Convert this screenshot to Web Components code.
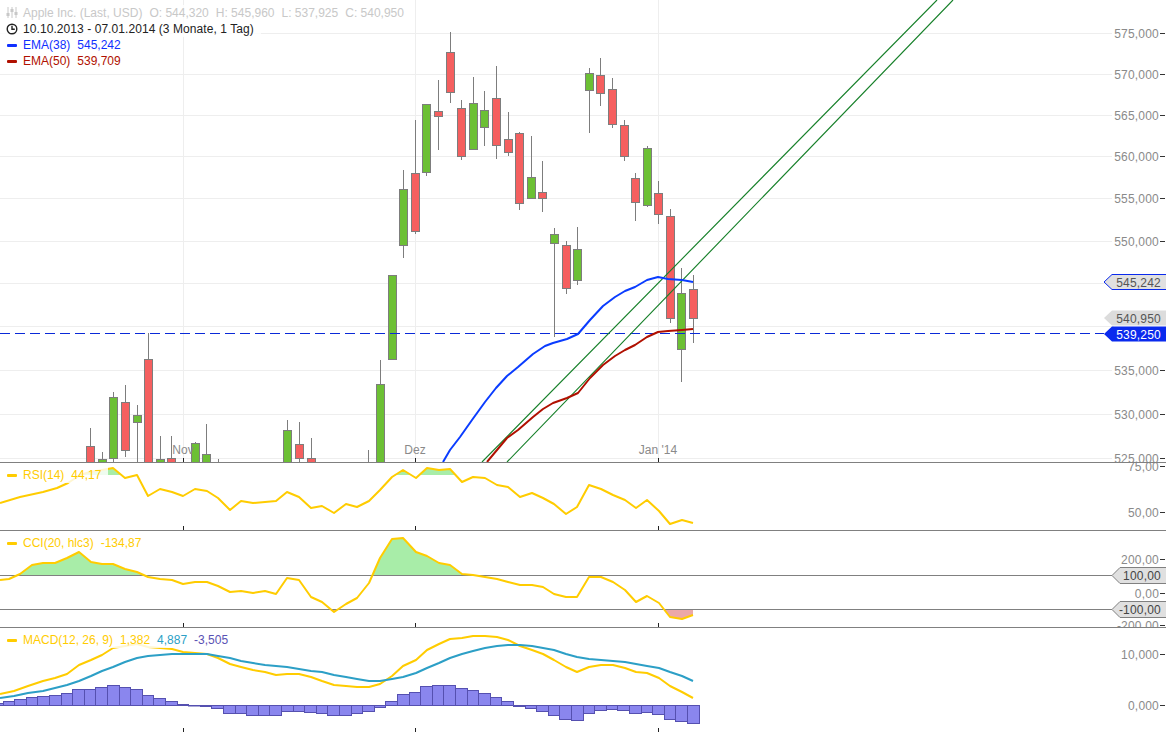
<!DOCTYPE html>
<html lang="de">
<head>
<meta charset="utf-8">
<title>Apple Inc.</title>
<style>
    html, body { margin: 0; padding: 0; background: #fff; overflow: hidden; }
    body { font: 12px "Liberation Sans", Arial, sans-serif; }
    .gap { margin-left: 7px; }
</style>
</head>
<body>
<stock-chart>
    <price-pane>
        <legend-row color="#c8c8c8" kind="sliders">Apple Inc. (Last, USD)<span class="gap">O: 544,320</span><span class="gap">H: 545,960</span><span class="gap">L: 537,925</span><span class="gap">C: 540,950</span></legend-row>
        <legend-row color="#222" kind="clock"><span style="letter-spacing:.07px">10.10.2013 - 07.01.2014 (3 Monate, 1 Tag)</span></legend-row>
        <legend-row color="#1030ff">EMA(38)<span class="gap">545,242</span></legend-row>
        <legend-row color="#b01000">EMA(50)<span class="gap">539,709</span></legend-row>
    </price-pane>
    <rsi-pane>
        <legend-row color="#ffcc00">RSI(14)<span class="gap">44,17</span></legend-row>
    </rsi-pane>
    <cci-pane>
        <legend-row color="#ffcc00">CCI(20, hlc3)<span class="gap">-134,87</span></legend-row>
    </cci-pane>
    <macd-pane>
        <legend-row color="#ffcc00">MACD(12, 26, 9)<span class="gap">1,382</span><span class="gap" style="color:#2c9fc6">4,887</span><span class="gap" style="color:#5a52b4">-3,505</span></legend-row>
    </macd-pane>
</stock-chart>

<script>
const SVG_FONT = 'font-family="Liberation Sans, Arial, sans-serif" font-size="12"';
const MONTH_TICKS = [183, 415, 658];
const YELLOW = '#ffcc00';

class StockChart extends HTMLElement {
    constructor() {
        super();
        this.attachShadow({ mode: 'open' });
        this.shadowRoot.innerHTML = `
            <style>
                :host { display: flex; flex-direction: column; width: 1166px; height: 732px; background: #fff; }
            </style>
            <slot></slot>
        `;
    }
}

class LegendRow extends HTMLElement {
    constructor() {
        super();
        this.attachShadow({ mode: 'open' });
    }

    connectedCallback() {
        const color = this.getAttribute('color');
        const kind = this.getAttribute('kind');
        let icon = `<i style="background:${color}"></i>`;
        if (kind === 'sliders') {
            icon = `<svg width="12" height="12" viewBox="0 0 12 12" fill="none" stroke="${color}">
                <path d="M2 0v11M6 0v11M10 0v11"/>
                <path d="M2 6v3M6 2v3M10 5v3" stroke-width="3"/>
            </svg>`;
        } else if (kind === 'clock') {
            icon = `<svg width="12" height="12" viewBox="0 0 12 12" fill="none" stroke="${color}" stroke-width="1.4">
                <circle cx="6" cy="6" r="4.8"/>
                <path d="M6 2.8V6.2H8.8"/>
            </svg>`;
        }
        this.shadowRoot.innerHTML = `
            <style>
                :host {
                    display: flex;
                    align-items: center;
                    width: fit-content;
                    height: 16px;
                    padding: 0 7px 0 6px;
                    background: rgba(255,255,255,0.82);
                    color: ${color};
                    white-space: nowrap;
                }
                .mark { width: 12px; margin-right: 5px; display: flex; align-items: center; }
                i { display: block; width: 10px; height: 3px; margin-left: 1px; border-radius: 1px; }
                svg { display: block; }
            </style>
            <span class="mark">${icon}</span>
            <slot></slot>
        `;
    }
}

// one chart panel: an svg in page coordinates with the legend on top of it
class ChartPane extends HTMLElement {
    constructor() {
        super();
        this.attachShadow({ mode: 'open' });
    }

    get top() { return 0; }
    get paneHeight() { return 100; }
    get legendTop() { return 4; }
    get hasBorder() { return true; }

    connectedCallback() {
        const t = this.top, h = this.paneHeight;
        this.shadowRoot.innerHTML = `
            <style>
                :host {
                    display: block;
                    position: relative;
                    flex: none;
                    height: ${h}px;
                    border-bottom: ${this.hasBorder ? '1px solid #808080' : 'none'};
                    overflow: hidden;
                }
                svg { display: block; }
                .legend { position: absolute; left: 0; top: ${this.legendTop}px; }
            </style>
            <svg width="1166" height="${h}" viewBox="0 ${t} 1166 ${h}" ${SVG_FONT}>${this.draw()}</svg>
            <div class="legend"><slot></slot></div>
        `;
    }

    draw() { return ''; }

    line(points, color, width = 2) {
        return `<polyline points="${points}" fill="none" stroke="${color}" stroke-width="${width}" stroke-linejoin="round"/>`;
    }

    hline(y, color = '#808080', x2 = 1166) {
        return `<path d="M0 ${y + 0.5}H${x2}" stroke="${color}"/>`;
    }

    ticks(bottom) {
        return MONTH_TICKS.map(x => `<path d="M${x + 0.5} ${bottom - 4}V${bottom}" stroke="#222"/>`).join('');
    }

    axisLabel(text, y) {
        return `<rect x="1112" y="${y - 6}" width="48" height="12" fill="#fff"/>
            <text x="1159" y="${y + 4.5}" text-anchor="end" letter-spacing=".2" fill="#8a8a8a">${text}</text>
            <path d="M1160 ${y + 0.5}H1165" stroke="#333"/>`;
    }

    // price tag pointing left at the plot
    tag(text, top, h, left, fill, color, stroke) {
        const tip = left + 8;
        const outline = stroke ? `stroke="${stroke}"` : '';
        return `<path d="M1167 ${top + 0.5}H${tip}L${left} ${top + h / 2 + 0.5}L${tip} ${top + h + 0.5}H1167Z" fill="${fill}" ${outline}/>
            <text x="1161" y="${top + 12.5}" text-anchor="end" letter-spacing=".2" fill="${color}">${text}</text>`;
    }

    // area between a curve and a level, on one side of the level only
    area(id, points, level, above, color) {
        const xs = points.trim().split(/\s+/).map(p => p.split(',')[0]);
        const first = xs[0], last = xs[xs.length - 1];
        const y = above ? this.top : level;
        const h = above ? level - this.top : this.top + this.paneHeight - level;
        return `<clipPath id="${id}"><rect x="0" y="${y}" width="1166" height="${h}"/></clipPath>
            <polygon clip-path="url(#${id})" points="${first},${level} ${points} ${last},${level}" fill="${color}"/>`;
    }
}

// x, wick top, body top, body bottom, wick bottom, 1 = green
const CANDLES = [
    [90, 428, 446, 470, 470, 0], [102, 452, 459, 470, 470, 1], [113, 392, 397, 458, 470, 1],
    [125, 385, 402, 450, 457, 0], [137, 405, 415, 422, 470, 1], [148, 333, 359, 470, 470, 0],
    [160, 436, 459, 470, 470, 1], [171, 436, 458, 470, 470, 0], [195, 442, 443, 470, 470, 1],
    [206, 424, 454, 470, 470, 1], [218, 459, 470, 470, 470, 1], [287, 420, 430, 470, 470, 1],
    [299, 422, 444, 458, 470, 0], [311, 438, 458, 470, 470, 0], [368, 450, 470, 470, 470, 1],
    [380, 360, 384, 470, 470, 1], [392, 275, 275, 359, 359, 1], [403, 170, 189, 245, 258, 1],
    [415, 120, 173, 231, 234, 0], [426, 104, 104, 172, 176, 1], [438, 80, 111, 116, 150, 0],
    [450, 32, 52, 92, 103, 0], [461, 100, 108, 156, 160, 0], [473, 77, 103, 149, 149, 1],
    [484, 91, 110, 127, 146, 1], [496, 66, 98, 145, 159, 0], [508, 112, 139, 152, 156, 0],
    [519, 132, 133, 203, 210, 0], [531, 136, 177, 198, 198, 1], [542, 161, 192, 198, 212, 0],
    [554, 228, 234, 243, 337, 1], [566, 241, 245, 288, 294, 0], [577, 227, 249, 280, 285, 1],
    [589, 68, 73, 90, 133, 1], [600, 58, 75, 93, 106, 0], [612, 78, 89, 124, 128, 0],
    [624, 120, 125, 156, 161, 0], [635, 173, 178, 202, 221, 0], [647, 146, 148, 205, 207, 1],
    [658, 181, 193, 214, 224, 0], [670, 209, 216, 318, 323, 0], [681, 268, 293, 349, 382, 1],
    [693, 275, 289, 318, 343, 0]
];

const EMA_38 = `443,462 450,450 460,437 472,420 485,402 496,388 507,376 518,367 533,354 545,346 553,343 567,339
    578,334 590,320 603,306 615,297 625,291 635,287 647,280 658,277 668,279 682,280 693,282`;
const EMA_50 = `487,462 507,438 518,430 533,417 543,409 553,403 567,398 578,393 590,378 603,365 615,356 625,350
    635,345 647,337 658,332 668,331 682,330 693,329`;

class PricePane extends ChartPane {
    get top() { return 0; }
    get paneHeight() { return 462; }
    get legendTop() { return 5; }

    draw() {
        const levels = [33, 74, 115, 156, 198, 241, 283, 326, 370, 414, 458];
        const labels = [['575,000', 33], ['570,000', 74], ['565,000', 115], ['560,000', 156], ['555,000', 198],
            ['550,000', 241], ['535,000', 370], ['530,000', 414], ['525,000', 458]];
        let out = levels.map(y => this.hline(y, '#eeeeee', 1114)).join('');
        out += MONTH_TICKS.map(x => `<path d="M${x + 0.5} 0V462" stroke="#eeeeee"/>`).join('');
        for (const [x, wt, bt, bb, wb, up] of CANDLES) {
            out += `<path d="M${x + 0.5} ${wt}V${wb}" stroke="#7d7d7d"/>`;
            out += `<rect x="${x - 3.5}" y="${bt + 0.5}" width="8" height="${bb - bt}" fill="${up ? '#6cc034' : '#f55f5f'}" stroke="#7d7d7d"/>`;
        }
        out += `<path d="M0 333.5H1104" stroke="#0a2ad8" stroke-dasharray="10 5"/>`;
        out += `<path d="M482 462L937 0M507 462L953 0" stroke="#17802a" stroke-width="1.15" fill="none"/>`;
        out += this.line(EMA_38, '#0a3cff');
        out += this.line(EMA_50, '#b01000');
        out += labels.map(([t, y]) => this.axisLabel(t, y)).join('');
        out += this.tag('545,242', 274, 15, 1104, '#e0e0e0', '#555', '#0a2aee');
        out += this.tag('540,950', 310, 15, 1104, '#dcdcdc', '#555');
        out += this.tag('539,250', 326, 15, 1104, '#0a2aee', '#fff');
        out += `<text x="183" y="454" text-anchor="middle" fill="#8a8a8a">Nov</text>
            <text x="415" y="454" text-anchor="middle" fill="#8a8a8a">Dez</text>
            <text x="658" y="454" text-anchor="middle" fill="#8a8a8a">Jan '14</text>`;
        out += this.ticks(462);
        return out;
    }
}

const RSI = `0,503 20,497 43,492 57,488 68,483 80,475 90,472 102,470 113,468 125,478 137,475 148,496 160,489 172,492
    183,496 195,489 207,491 218,498 230,510 241,501 253,503 276,501 287,492 299,497 311,508 322,506 334,513 346,504
    357,507 369,501 380,490 392,477 403,470 416,478 427,468 439,470 450,469 462,482 473,477 485,478 497,485 508,487
    520,497 532,493 543,498 554,504 566,514 577,507 589,485 601,489 613,495 625,500 636,508 647,500 659,511 670,524
    682,520 693,523`;

class RsiPane extends ChartPane {
    get top() { return 463; }
    get paneHeight() { return 67; }

    draw() {
        return this.area('rsi-up', RSI, 475, true, '#a8eda8')
            + this.line(RSI, YELLOW)
            + this.axisLabel('75,00', 466)
            + this.axisLabel('50,00', 512)
            + this.ticks(530);
    }
}

const CCI = `0,580 9,579 20,574 32,565 43,563 55,563 67,558 79,552 91,562 102,564 113,564 125,569 137,572 148,577 160,579
    172,580 183,584 195,582 207,582 218,586 230,592 241,591 253,593 265,591 276,594 287,578 299,580 311,597 322,602
    334,612 346,604 357,598 369,583 380,558 392,539 403,538 416,552 427,556 439,563 450,565 462,574 473,575 485,577
    497,579 508,582 520,585 532,585 543,587 554,594 566,597 577,597 589,577 601,577 613,582 625,590 636,602 647,596
    659,603 670,617 682,619 693,615`;

class CciPane extends ChartPane {
    get top() { return 531; }
    get paneHeight() { return 96; }

    draw() {
        return this.area('cci-up', CCI, 575.5, true, '#a8eda8')
            + this.area('cci-down', CCI, 609.5, false, '#eca8a8')
            + this.hline(575, '#808080', 1112)
            + this.hline(609, '#808080', 1112)
            + this.line(CCI, YELLOW)
            + this.axisLabel('200,00', 559)
            + this.axisLabel('0,00', 593)
            + this.axisLabel('-200,00', 625)
            + this.tag('100,00', 567, 16, 1112, '#e0e0e0', '#444', '#808080')
            + this.tag('-100,00', 601, 16, 1112, '#e0e0e0', '#444', '#808080')
            + this.ticks(627);
    }
}

const MACD = `0,694 14,691 28,686 43,681 55,678 67,674 79,665 91,660 102,655 113,648 125,646 137,644 148,647 160,648 172,649
    183,652 195,653 207,654 218,658 230,664 241,667 253,670 265,672 276,675 287,674 299,674 311,677 322,681 334,685
    346,686 357,687 369,687 380,684 392,676 403,666 416,660 427,650 439,644 450,639 462,638 473,636 485,636 497,637
    508,640 520,646 532,650 543,654 554,660 566,667 577,672 589,667 601,665 613,665 625,668 636,672 647,673 659,678
    670,686 682,692 693,698`;
const SIGNAL = `0,698 14,696 28,693 43,691 55,688 67,685 79,681 91,676 102,671 113,667 125,662 137,658 148,656 160,655 172,654
    183,654 195,654 207,654 218,656 230,658 241,661 253,663 265,665 276,666 287,667 299,669 311,671 322,672 334,675
    346,677 357,679 369,681 380,681 392,679 403,677 416,673 427,668 439,663 450,658 462,654 473,651 485,648 497,646
    508,645 520,645 532,646 543,648 554,650 566,654 577,657 589,659 601,660 613,661 625,662 636,664 647,666 659,668
    670,672 682,676 693,681`;
// histogram ends, oldest bar first, one per candle slot
const HIST = [703, 701, 699, 697, 696, 695, 693, 689, 689, 687, 685, 687, 689, 695, 698, 701, 704, 705, 706, 708,
    713, 713, 715, 715, 715, 711, 711, 712, 713, 715, 715, 713, 711, 707, 701, 694, 692, 686, 685, 685, 688, 690,
    693, 697, 701, 706, 708, 711, 715, 719, 720, 713, 710, 709, 710, 713, 712, 714, 719, 721, 723];

class MacdPane extends ChartPane {
    get top() { return 628; }
    get paneHeight() { return 104; }
    get hasBorder() { return false; }

    draw() {
        const zero = 705;
        const bars = HIST.map((y, i) => {
            const cx = 692.8 - 11.6 * (HIST.length - 1 - i);
            const x = Math.round(cx - 5.8) + 0.5;
            const w = Math.round(cx + 5.8) - Math.round(cx - 5.8);
            const top = Math.min(y, zero), h = Math.max(Math.abs(y - zero), 0.5);
            return `<rect x="${x}" y="${top + 0.5}" width="${w}" height="${h}" fill="#8a86ee" stroke="#5550b0"/>`;
        }).join('');
        return bars
            + this.line(MACD, YELLOW)
            + this.line(SIGNAL, '#2c9fc6')
            + this.axisLabel('10,000', 654)
            + this.axisLabel('0,000', 705)
            + this.ticks(732);
    }
}

customElements.define('stock-chart', StockChart);
customElements.define('legend-row', LegendRow);
customElements.define('price-pane', PricePane);
customElements.define('rsi-pane', RsiPane);
customElements.define('cci-pane', CciPane);
customElements.define('macd-pane', MacdPane);
</script>
</body>
</html>
